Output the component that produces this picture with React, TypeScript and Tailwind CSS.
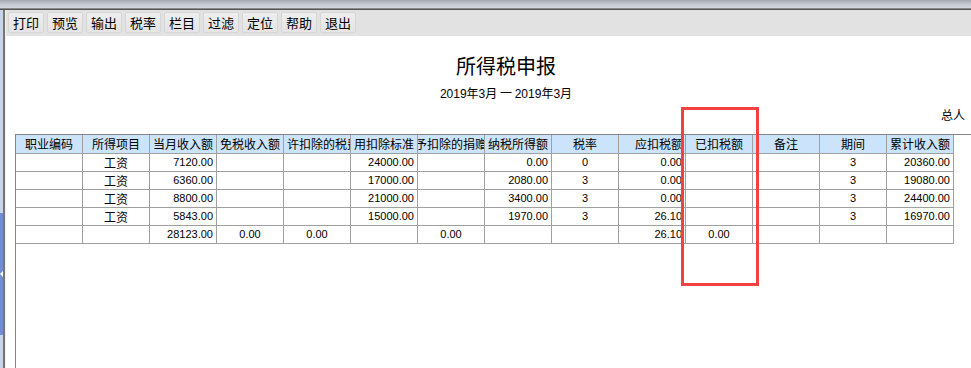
import React from "react";

const tools = ["打印", "预览", "输出", "税率", "栏目", "过滤", "定位", "帮助", "退出"];

type Cell = { t: string; a: "l" | "c" | "r"; cn?: boolean };

const headers: { t: string; cls: string }[] = [
  { t: "职业编码", cls: "justify-center" },
  { t: "所得项目", cls: "justify-center" },
  { t: "当月收入额", cls: "justify-center" },
  { t: "免税收入额", cls: "justify-center" },
  { t: "许扣除的税费", cls: "justify-start pl-[3px]" },
  { t: "用扣除标准", cls: "justify-center" },
  { t: "准予扣除的捐赠额", cls: "justify-center" },
  { t: "纳税所得额", cls: "justify-center" },
  { t: "税率", cls: "justify-center" },
  { t: "应扣税额", cls: "justify-end pr-[2px]" },
  { t: "已扣税额", cls: "justify-center" },
  { t: "备注", cls: "justify-center" },
  { t: "期间", cls: "justify-center" },
  { t: "累计收入额", cls: "justify-center" },
];

const E: Cell = { t: "", a: "l" };
const R = (t: string): Cell => ({ t, a: "r" });
const C = (t: string): Cell => ({ t, a: "c" });
const W: Cell = { t: "工资", a: "c", cn: true };

const rows: Cell[][] = [
  [E, W, R("7120.00"), E, E, R("24000.00"), E, R("0.00"), C("0"), R("0.00"), E, E, C("3"), R("20360.00")],
  [E, W, R("6360.00"), E, E, R("17000.00"), E, R("2080.00"), C("3"), R("0.00"), E, E, C("3"), R("19080.00")],
  [E, W, R("8800.00"), E, E, R("21000.00"), E, R("3400.00"), C("3"), R("0.00"), E, E, C("3"), R("24400.00")],
  [E, W, R("5843.00"), E, E, R("15000.00"), E, R("1970.00"), C("3"), R("26.10"), E, E, C("3"), R("16970.00")],
  [E, E, R("28123.00"), C("0.00"), C("0.00"), E, C("0.00"), E, E, R("26.10"), C("0.00"), E, E, E],
];

const cjk = "font-['SimSun','Noto_Sans_CJK_SC',sans-serif]";
const num = "font-['Liberation_Sans','Arial',sans-serif]";

export default function App() {
  return (
    <div className={`relative w-[971px] h-[368px] overflow-hidden bg-white flex flex-col ${cjk}`}>
      {/* top strip */}
      <div className="h-[8px] bg-gradient-to-b from-[#a3a8b0] via-[#c2c7d1] to-[#d5d8e0]" />
      <div className="h-[1px] bg-[#8a8a8a]" />
      <div className="h-[1px] bg-[#555555]" />
      <div className="flex flex-1">
        {/* left frame */}
        <div className="w-[3px] flex flex-col bg-[#c8d4e7]">
          <div className="h-[203px]" />
          <div className="h-[122px] bg-[#6f8fd0] flex flex-col items-center justify-center">
            <svg width="3" height="6" viewBox="0 0 3 6">
              <path d="M3 0 L0 3 L3 6 Z" fill="#ffffff" />
            </svg>
          </div>
          <div className="flex-1" />
        </div>
        <div className="w-[2px] bg-[#767676]" />
        <div className="w-[1px] bg-[#f2f2f2]" />
        <div className="flex-1 flex flex-col">
          {/* toolbar */}
          <div className="h-[26px] bg-[#e2e2e2] flex items-start pt-[2px] pl-[2px] gap-[3px]">
            {tools.map((t) => (
              <div
                key={t}
                className="h-[21px] w-[36px] rounded-[2px] border border-[#d6d6d6] bg-gradient-to-b from-[#eeeeee] to-[#e4e4e4] flex items-center justify-center text-[13px] leading-none text-black"
              >
                {t}
              </div>
            ))}
          </div>
          {/* content */}
          <div className="flex-1 flex flex-col bg-white">
            <div className="mt-[18px] pl-[35px] text-center text-[20px] leading-[24px] text-black">所得税申报</div>
            <div className="mt-[7px] pl-[35px] text-center text-[12px] leading-[16px] text-black">
              <span className={num}>2019</span>年<span className={num}>3</span>月 一 <span className={num}>2019</span>年<span className={num}>3</span>月
            </div>
            <div className="mt-[5px] flex justify-end pr-[6px] text-[12px] leading-[16px] text-black">总人</div>
            <div className="mt-[11px] ml-[9px] flex-1 border-l border-t border-[#858585]">
              <div className="grid grid-cols-[repeat(14,67px)] w-[938px]">
                {headers.map((h, i) => (
                  <div
                    key={"h" + i}
                    className={`h-[19px] bg-[#cce4fb] border-r border-b border-[#a0a0a0] flex items-center overflow-hidden whitespace-nowrap text-[12px] leading-none text-black ${h.cls}`}
                  >
                    {h.t}
                  </div>
                ))}
                {rows.map((r, ri) =>
                  r.map((c, ci) => (
                    <div
                      key={ri + "-" + ci}
                      className={`h-[18px] border-r border-b border-[#a0a0a0] flex items-center overflow-hidden whitespace-nowrap leading-none text-black ${
                        c.cn ? "text-[12px]" : `${num} text-[11px]`
                      } ${c.a === "r" ? "justify-end pr-[3px]" : c.a === "c" ? "justify-center" : "justify-start"}`}
                    >
                      {c.t}
                    </div>
                  ))
                )}
              </div>
            </div>
          </div>
        </div>
      </div>
      {/* red highlight box */}
      <div className="absolute left-[681px] top-[107px] w-[78px] h-[179px] border-[3px] border-[#f24141]" />
    </div>
  );
}
